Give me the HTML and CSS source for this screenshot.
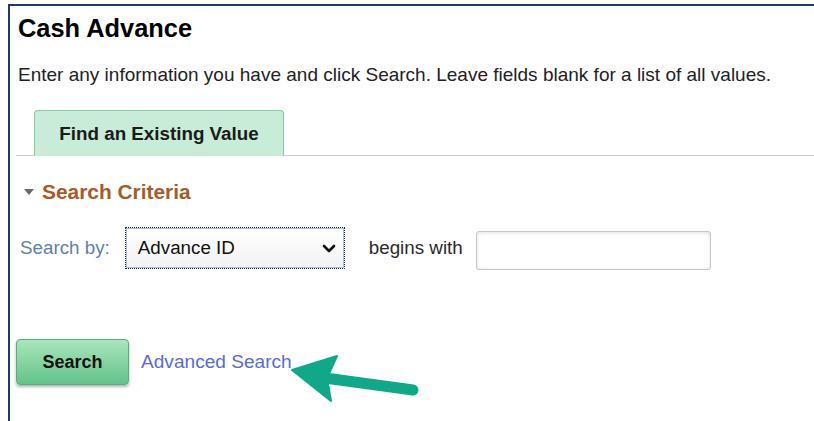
FILE: index.html
```html
<!DOCTYPE html>
<html lang="en">
<head>
<meta charset="utf-8">
<title>Cash Advance</title>
<link rel="stylesheet" href="styles.css">
</head>
<body>
<div class="frame">
  <h1 class="title">Cash Advance</h1>
  <p class="intro">Enter any information you have and click Search. Leave fields blank for a list of all values.</p>

  <div class="tabs">
    <div class="tab">Find an Existing Value</div>
  </div>

  <div class="criteria">
    <span class="caret"></span>
    <span>Search Criteria</span>
  </div>

  <div class="search-row">
    <label class="lbl">Search by:</label>
    <div class="select">
      <span class="select-value">Advance ID</span>
      <svg class="chev" width="14" height="9" viewBox="0 0 14 9" aria-hidden="true">
        <path d="M2 2 L7 7 L12 2" fill="none" stroke="#111" stroke-width="2.6" stroke-linecap="round" stroke-linejoin="round"/>
      </svg>
    </div>
    <span class="op">begins with</span>
    <input class="field" type="text">
  </div>

  <div class="actions">
    <button class="btn" type="button">Search</button>
    <a class="adv" href="#">Advanced Search</a>
    <svg class="pointer" width="150" height="60" viewBox="0 0 150 60" aria-hidden="true">
      <path d="M44 27 L132 39" stroke="#0fa98a" stroke-width="11" stroke-linecap="round"/>
      <path d="M11 19 L56 5 L46 27 L50 50 Z" fill="#0fa98a" stroke="#0fa98a" stroke-width="2" stroke-linejoin="round"/>
    </svg>
  </div>
</div>
</body>
</html>
```

FILE: styles.css
```css
html, body {
  margin: 0;
  padding: 0;
  background: #fff;
  overflow: hidden;
}

body {
  font-family: "Liberation Sans", Arial, sans-serif;
  color: #1a1a1a;
}

.frame {
  margin: 4px 0 0 8px;
  height: 430px;
  border-top: 2px solid #1f3a68;
  border-left: 2px solid #1f3a68;
  padding-left: 6px;
}

.title {
  margin: 0;
  padding: 7px 0 0 2px;
  font-size: 25.4px;
  line-height: 30px;
  font-weight: bold;
  color: #000;
}

.intro {
  margin: 21px 0 0 2px;
  font-size: 19px;
  line-height: 22px;
  color: #222;
}

.tabs {
  margin-top: 24px;
  display: flex;
  padding-left: 18px;
  border-bottom: 1px solid #cacaca;
}

.tab {
  box-sizing: border-box;
  width: 250px;
  height: 46px;
  margin-bottom: -1px;
  display: flex;
  align-items: center;
  justify-content: center;
  background: #c8ecd7;
  border: 1px solid #84cf9f;
  border-bottom: none;
  border-radius: 4px 4px 0 0;
  font-size: 18.8px;
  font-weight: bold;
  color: #1a1a1a;
}

.criteria {
  margin-top: 24px;
  padding-left: 8px;
  display: flex;
  align-items: center;
  gap: 8px;
  font-size: 20.9px;
  line-height: 24px;
  font-weight: bold;
  color: #a85b27;
}

.caret {
  width: 0;
  height: 0;
  border-left: 5.5px solid transparent;
  border-right: 5.5px solid transparent;
  border-top: 6px solid #6a6a6a;
}

.search-row {
  margin-top: 22px;
  height: 44px;
  display: flex;
  align-items: center;
  padding-left: 4px;
}

.lbl {
  font-size: 18.8px;
  color: #5f7fb2;
}

.select {
  box-sizing: border-box;
  margin-left: 16px;
  width: 218px;
  height: 40px;
  display: flex;
  align-items: center;
  justify-content: space-between;
  padding: 0 7px 0 11px;
  border: 1px solid #a4c0e4;
  outline: 1px dotted #222;
  background: linear-gradient(#ffffff, #f2f2f2);
  font-size: 18.8px;
  color: #111;
}

.chev {
  display: block;
  margin-top: 1px;
}

.op {
  margin-left: 25px;
  font-size: 18.8px;
  color: #2a2a2a;
}

.field {
  box-sizing: border-box;
  margin: 5px 0 0 13px;
  width: 235px;
  height: 39px;
  border: 1px solid #c6c6c6;
  border-radius: 3px;
  box-shadow: inset 0 1px 4px rgba(0, 0, 0, 0.12);
  background: #fff;
}

.actions {
  position: relative;
  margin-top: 69px;
  display: flex;
  align-items: center;
}

.btn {
  box-sizing: border-box;
  width: 113px;
  height: 46px;
  border: 1px solid #58b077;
  border-radius: 4px;
  background: linear-gradient(#a9e5bd, #63c387);
  box-shadow: 0 2px 3px rgba(0, 0, 0, 0.3);
  font-family: "Liberation Sans", Arial, sans-serif;
  font-size: 18px;
  font-weight: bold;
  color: #141414;
  padding: 0;
}

.adv {
  margin-left: 12px;
  font-size: 19.1px;
  color: #5a6bd6;
  text-decoration: none;
}

.pointer {
  position: absolute;
  left: 265px;
  top: 12px;
}
```
